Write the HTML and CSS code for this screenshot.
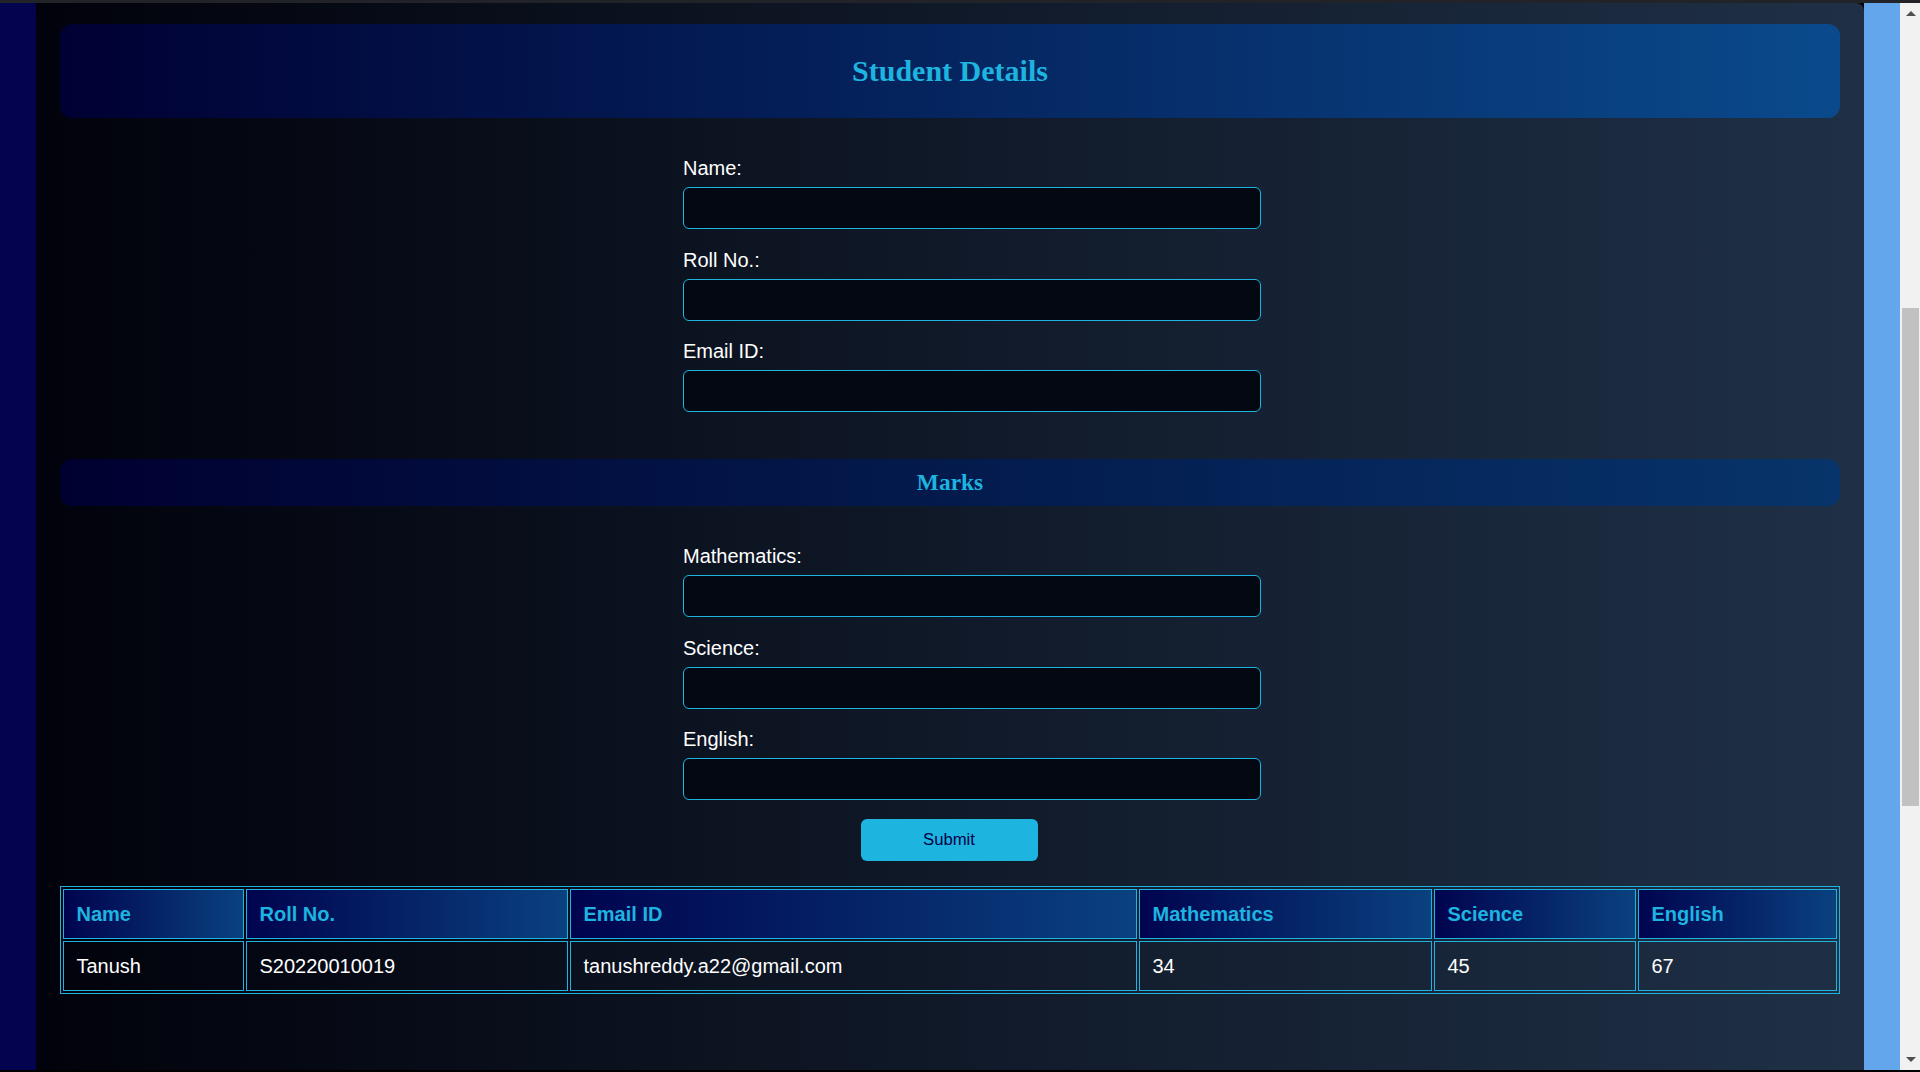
FILE: index.html
```html
<!DOCTYPE html>
<html lang="en">
<head>
<meta charset="utf-8">
<title>Student Details</title>
<link rel="stylesheet" href="styles.css">
</head>
<body>
<div class="topbar"></div>
<div class="row">
  <div class="strip-left"></div>
  <main class="container">
    <div class="banner"><h2>Student Details</h2></div>
    <form class="form">
      <div class="field"><label for="name">Name:</label><input id="name" type="text"></div>
      <div class="field"><label for="roll">Roll No.:</label><input id="roll" type="text"></div>
      <div class="field"><label for="email">Email ID:</label><input id="email" type="email"></div>
    </form>
    <div class="banner banner-marks"><h3>Marks</h3></div>
    <form class="form">
      <div class="field"><label for="math">Mathematics:</label><input id="math" type="text"></div>
      <div class="field"><label for="sci">Science:</label><input id="sci" type="text"></div>
      <div class="field"><label for="eng">English:</label><input id="eng" type="text"></div>
      <button type="button" class="submit">Submit</button>
    </form>
    <table class="results">
      <thead>
        <tr>
          <th class="c-name">Name</th>
          <th class="c-roll">Roll No.</th>
          <th class="c-email">Email ID</th>
          <th class="c-math">Mathematics</th>
          <th class="c-sci">Science</th>
          <th class="c-eng">English</th>
        </tr>
      </thead>
      <tbody>
        <tr>
          <td>Tanush</td>
          <td>S20220010019</td>
          <td>tanushreddy.a22@gmail.com</td>
          <td>34</td>
          <td>45</td>
          <td>67</td>
        </tr>
      </tbody>
    </table>
  </main>
  <div class="strip-right"></div>
  <div class="scrollbar">
    <div class="sb-btn"><span class="tri-up"></span></div>
    <div class="sb-track"><div class="sb-thumb"></div></div>
    <div class="sb-btn"><span class="tri-down"></span></div>
  </div>
</div>
<div class="bottombar"></div>
</body>
</html>
```
FILE: styles.css
```css
* { box-sizing: border-box; }
html, body { margin: 0; padding: 0; }
body {
  background: #000;
  font-family: "Liberation Sans", Arial, sans-serif;
  color: #fff;
  height: 1072px;
  overflow: hidden;
}
.topbar { height: 3px; background: #222328; }
.bottombar { height: 2px; background: #000; }
.row { display: flex; height: 1067px; }
.strip-left { width: 36px; background: #03034f; flex: none; }
.strip-right { width: 36px; background: #64a6ec; flex: none; }
.container {
  flex: 1;
  background: linear-gradient(to right, #01020b, #1f3046);
  border-radius: 8px 8px 0 0;
  padding: 21px 24px 0;
}
.banner {
  border-radius: 12px;
  background: linear-gradient(to right, #000033, #0a4a8c);
  text-align: center;
}
.banner h2 {
  margin: 0;
  padding: 30px 0;
  line-height: 34px;
  font-family: "Liberation Serif", "Times New Roman", serif;
  font-size: 30px;
  font-weight: bold;
  color: #1eb4e0;
}
.banner-marks {
  margin-top: 47px;
  background: linear-gradient(to right, #000030, #07346a);
}
.banner h3 {
  margin: 0;
  padding: 10px 0;
  line-height: 27px;
  font-family: "Liberation Serif", "Times New Roman", serif;
  font-size: 23.4px;
  font-weight: bold;
  color: #1eb4e0;
}
.form {
  width: 532px;
  margin: 38px auto 0;
  display: flex;
  flex-direction: column;
  gap: 18.5px;
  position: relative;
  left: -1px;
}
.field { display: flex; flex-direction: column; gap: 7px; }
.field label { font-size: 20px; line-height: 23px; padding-top: 1px; color: #fff; }
.field input {
  width: calc(100% + 46px);
  height: 42px;
  background: #040812;
  border: 1px solid #1eb4e0;
  border-radius: 6px;
  color: #fff;
  font-size: 16.7px;
  padding: 0 12px;
  outline: none;
}
.submit {
  align-self: center;
  margin-top: 0;
  width: 177px;
  height: 42px;
  background: #1eb4e0;
  color: #000046;
  border: none;
  border-radius: 6px;
  font-family: "Liberation Sans", Arial, sans-serif;
  font-size: 16.7px;
}
.results {
  width: 100%;
  margin-top: 25.5px;
  table-layout: fixed;
  border-collapse: separate;
  border-spacing: 2px;
  border: 1px solid #1eb4e0;
}
.results th, .results td {
  border: 1px solid #1eb4e0;
  padding: 12.5px 12.5px;
  font-size: 20px;
  line-height: 23px;
  text-align: left;
  white-space: nowrap;
}
.results th {
  color: #1eb4e0;
  font-weight: bold;
  background: linear-gradient(to right, #00044f, #0a417f);
}
.results td { color: #fff; }
.c-name { width: 181px; }
.c-roll { width: 322px; }
.c-email { width: 567px; }
.c-math { width: 293px; }
.c-sci { width: 202px; }
.c-eng { width: 199px; }
.scrollbar {
  width: 21px;
  flex: none;
  background: #f1f1f1;
  display: flex;
  flex-direction: column;
}
.sb-btn {
  height: 21px;
  display: flex;
  align-items: center;
  justify-content: center;
  flex: none;
}
.tri-up {
  width: 0; height: 0;
  border-left: 5px solid transparent;
  border-right: 5px solid transparent;
  border-bottom: 5px solid #505050;
}
.tri-down {
  width: 0; height: 0;
  border-left: 5px solid transparent;
  border-right: 5px solid transparent;
  border-top: 5px solid #505050;
}
.sb-track { flex: 1; padding: 284px 2px 0; }
.sb-thumb { height: 498px; background: #c1c1c1; }
```
